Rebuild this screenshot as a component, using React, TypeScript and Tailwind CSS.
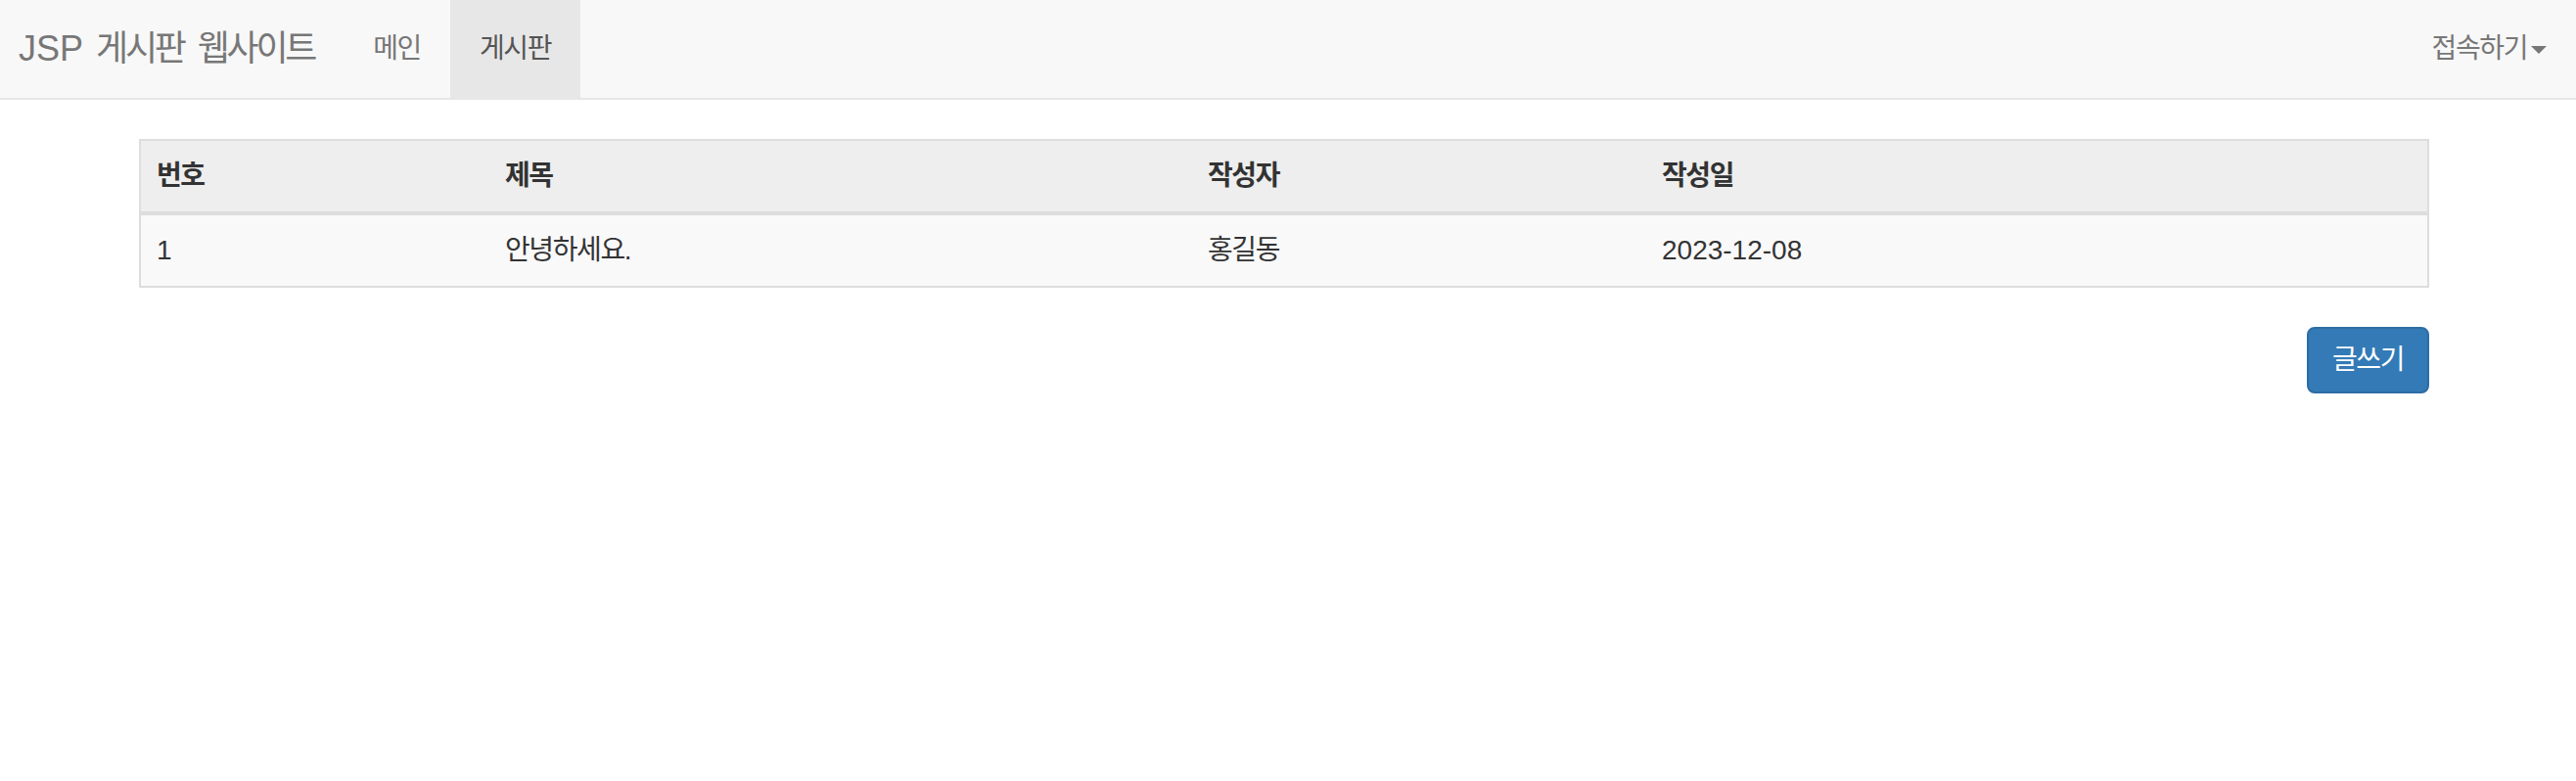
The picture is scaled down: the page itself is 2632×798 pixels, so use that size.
import React from "react";

const KR = "tracking-[-0.05em]";

export default function App() {
  return (
    <div className="min-h-[798px] bg-white text-[#333] [font-family:'Liberation_Sans','Noto_Sans_CJK_KR',sans-serif] text-[28px] leading-[40px]">
      <nav className="flex h-[102px] items-stretch justify-between border-b-2 border-[#e7e7e7] bg-[#f8f8f8]">
        <div className="flex items-stretch">
          <a className="flex items-center pl-[19px] pr-[30px] text-[36px] leading-[40px] text-[#777]">
            <span>JSP</span>
            <span className="ml-[13px] tracking-[-0.09em]">게시판</span>
            <span className="ml-[14px] tracking-[-0.09em]">웹사이트</span>
          </a>
          <ul className="flex items-stretch">
            <li className="flex items-center px-[30px] text-[#777]">
              <span className={KR}>메인</span>
            </li>
            <li className="flex items-center bg-[#e7e7e7] px-[30px] text-[#555]">
              <span className={KR}>게시판</span>
            </li>
          </ul>
        </div>
        <div className="flex items-center pr-[30px] pl-[30px] text-[#777]">
          <span className={KR}>접속하기</span>
          <span className="ml-[4px] mt-[2px] h-0 w-0 border-x-[8px] border-t-[8px] border-x-transparent border-t-[#777]" />
        </div>
      </nav>

      <div className="mx-[142px] mt-[40px] w-[2340px]">
        <table className="w-full table-fixed border-separate border-spacing-0 border-2 border-[#ddd]">
          <colgroup>
            <col className="w-[356px]" />
            <col className="w-[718px]" />
            <col className="w-[464px]" />
            <col />
          </colgroup>
          <thead>
            <tr className="bg-[#eeeeee]">
              <th className="border-b-4 border-[#ddd] p-[16px] text-left font-bold"><span className={KR}>번호</span></th>
              <th className="border-b-4 border-[#ddd] p-[16px] text-left font-bold"><span className={KR}>제목</span></th>
              <th className="border-b-4 border-[#ddd] p-[16px] text-left font-bold"><span className={KR}>작성자</span></th>
              <th className="border-b-4 border-[#ddd] p-[16px] text-left font-bold"><span className={KR}>작성일</span></th>
            </tr>
          </thead>
          <tbody>
            <tr className="bg-[#f9f9f9]">
              <td className="p-[16px]">1</td>
              <td className="p-[16px]"><span className={KR}>안녕하세요</span>.</td>
              <td className="p-[16px]"><span className={KR}>홍길동</span></td>
              <td className="p-[16px]">2023-12-08</td>
            </tr>
          </tbody>
        </table>
        <div className="mt-[40px] flex justify-end">
          <a className="flex h-[68px] items-center rounded-[8px] border-2 border-[#2e6da4] bg-[#337ab7] px-[24px] text-white">
            <span className={KR}>글쓰기</span>
          </a>
        </div>
      </div>
    </div>
  );
}
